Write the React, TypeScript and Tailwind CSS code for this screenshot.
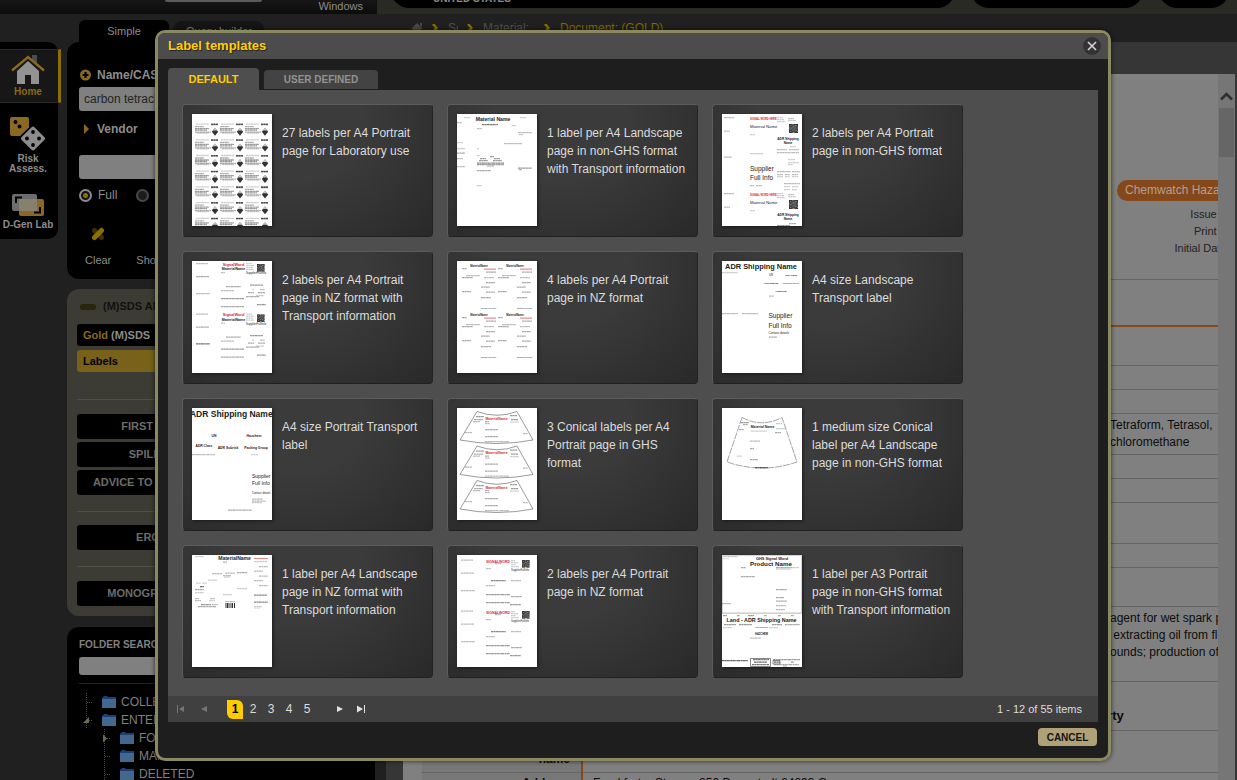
import React from "react";

/* ---------- drawing helpers for the label thumbnails ---------- */

type TextProps = {
  x: number;
  y: number;
  s: number;
  c?: string;
  bold?: boolean;
  mid?: boolean;
  children: React.ReactNode;
};

function T({ x, y, s, c = "#222", bold, mid, children }: TextProps) {
  return (
    <text
      x={x}
      y={y}
      fontSize={s}
      fill={c}
      fontWeight={bold ? 700 : 400}
      textAnchor={mid ? "middle" : "start"}
      fontFamily='"Liberation Sans", Arial, sans-serif'
    >
      {children}
    </text>
  );
}

/* Small print: each entry is [x, y, width, darkness 0..9] */
function Print({ rows, dy = 0 }: { rows: number[][]; dy?: number }) {
  return (
    <g stroke="#111" strokeWidth="1.3" strokeDasharray="2.6 .3 1.4 .3 3.2 .4 1.8 .3">
      {rows.map(([x, y, w, d = 4], i) => (
        <line key={i} x1={x} x2={x + w} y1={y + dy + 0.6} y2={y + dy + 0.6} strokeOpacity={d / 14} />
      ))}
    </g>
  );
}

function Qr({ x, y, s = 8 }: { x: number; y: number; s?: number }) {
  const u = s / 8;
  const cells = ["11101111", "10111001", "11100111", "01011010", "10110111", "11101001", "10111110", "11100111"];
  return (
    <g>
      <rect x={x} y={y} width={s} height={s} fill="#8a8a8a" />
      {cells.map((row, r) =>
        row.split("").map((v, c) => (v === "1" ? <rect key={`${r}-${c}`} x={x + c * u} y={y + r * u} width={u} height={u} fill="#2c2c2c" /> : null)),
      )}
    </g>
  );
}

function LabSheet() {
  const items: React.ReactNode[] = [];
  for (let r = 0; r < 7; r++) {
    for (let c = 0; c < 3; c++) {
      items.push(
        <g key={`${r}-${c}`} transform={`translate(${c * 25} ${r * 15.7})`}>
          <Print rows={[[4, 9.5, 13, 3], [19, 9.6, 7, 9], [19, 10.1, 7, 7], [3, 12, 9, 5], [3, 14, 14, 6], [3, 15.5, 12, 6], [3, 17.5, 16, 5], [5, 18.5, 12, 3]]} />
          <path d="M23 14l3.2 3.8-3.2 4-3.2-4z" fill="#333" />
          <path d="M23 13.500l2.600 3h-5.200z" fill="#c4c4c4" />
        </g>,
      );
    }
  }
  return <>{items}</>;
}

function LandscapeTransport() {
  return (
    <>
      <T x={36} y={6.5} s={5.1} bold mid>Material Name</T>
      <Print
        rows={[[7, 3, 6, 3], [0, 8, 5, 4], [63, 3, 6, 3], [25, 10, 16, 8], [55, 11, 4, 3], [20, 14, 5, 4], [61, 18, 14, 4], [62, 20, 4, 3], [0, 28, 6, 3], [47, 29, 18, 4], [0, 34, 8, 3], [20, 34, 2, 3], [0, 38.5, 8, 5], [20, 41, 3, 3], [33, 42, 4, 6], [23, 44, 6, 6], [37, 44, 6, 6], [0, 44, 6, 4], [22, 46, 9, 6], [36, 46, 9, 6], [20, 48.5, 27, 7], [20, 50, 27, 6], [30, 51.5, 7, 4], [0, 52, 8, 4], [61, 53.5, 14, 6], [62, 55, 3, 5], [20, 56, 14, 5], [20, 71, 5, 3]]}
      />
    </>
  );
}

function PortraitNonGhs() {
  const half = (dy: number) => (
    <g key={dy}>
      <T x={28} y={dy + 6} s={2.6} c="#e02424" bold>SIGNAL WORD HERE</T>
      <T x={28} y={dy + 14.3} s={4.2}>Material Name</T>
      <Qr x={67} y={dy + 10} s={9} />
      <T x={66} y={dy + 26} s={3.2} bold mid>ADR Shipping</T>
      <T x={66} y={dy + 29.6} s={3.2} bold mid>Name</T>
      <Print dy={dy} rows={[[2, 3, 10, 4], [55, 3, 6, 3], [55, 5, 7, 3], [55, 7, 8, 3], [66, 4, 6, 4], [66, 6, 8, 3], [2, 16.5, 6, 4], [28, 20, 5, 3]]} />
    </g>
  );
  return (
    <>
      {half(0)}
      {half(76)}
      <T x={28} y={57} s={6.5}>Supplier</T>
      <T x={28} y={66} s={6.5}>Full Info</T>
      <Print
        rows={[[68, 32, 6, 3], [55, 35, 10, 4], [67, 35, 10, 4], [55, 38, 22, 4], [28, 39, 13, 3], [2, 42.5, 8, 4], [66, 45, 7, 3], [66, 48, 11, 3], [66, 50, 5, 3], [55, 57, 14, 4], [70, 57, 8, 4], [55, 60, 6, 4], [63, 60, 5, 4], [70, 60, 6, 4], [55, 62, 6, 3], [63, 62, 5, 3], [70, 62, 6, 3], [62, 69, 16, 4], [28, 71, 4, 4], [34, 71, 6, 4], [62, 72, 6, 3], [70, 72, 6, 3], [62, 75, 6, 3], [70, 75, 5, 3], [67, 109, 7, 5], [55, 111, 13, 6]]}
      />
    </>
  );
}

function NzTransport() {
  const half = (dy: number) => (
    <g key={dy}>
      <T x={41.5} y={dy + 4.8} s={3.9} c="#cf1f35" bold mid>SignalWord</T>
      <T x={41.5} y={dy + 9} s={3.6} bold mid>MaterialName</T>
      <Qr x={65} y={dy + 3} s={7.5} />
      <T x={54} y={dy + 13.3} s={2.9}>SupplierFullInfo</T>
      <Print dy={dy} rows={[[4, 2, 12, 4], [54, 2, 6, 3], [54, 4, 8, 3], [54, 6, 7, 3], [54, 8, 8, 3], [4, 15, 13, 5], [29, 11, 4, 4], [34, 25, 15, 5], [58, 23.5, 13, 6], [60, 28, 2, 3], [68, 28, 5, 4], [29, 29, 13, 4], [56, 31, 6, 5], [66, 31, 7, 5], [4, 32, 14, 4], [54, 35, 13, 5], [64, 34, 8, 3], [29, 37, 23, 6], [65, 43, 9, 6], [29, 45, 23, 5]]} />
    </g>
  );
  return (
    <>
      {half(0)}
      {half(50.5)}
      <Print rows={[[4, 82, 14, 5]]} />
    </>
  );
}

function FourNz() {
  const quarter = (dx: number, dy: number) => (
    <g key={`${dx}-${dy}`} transform={`translate(${dx} ${dy})`}>
      <T x={22} y={6.3} s={2.7} bold mid>MaterialName</T>
      <rect x={27} y={7.600} width={12} height={1} fill="#dd3340" opacity=".7" />
      <Print rows={[[5, 7, 5, 5], [29, 10.5, 10, 5], [9, 14, 14, 4], [5, 16, 11, 5], [27, 16, 10, 4], [29, 21, 9, 5], [24, 25.5, 9, 5], [5, 30, 9, 5], [29, 30.5, 9, 5], [24, 36, 10, 5]]} />
      <T x={24} y={48} s={2.2}>SupplierFullInfo</T>
    </g>
  );
  return <>{[0, 49].map((dy) => [0, 36].map((dx) => quarter(dx, dy)))}</>;
}

function LandscapeAdr() {
  return (
    <>
      <T x={39} y={7.8} s={7.4} bold mid>ADR Shipping Name</T>
      <T x={49} y={15} s={2.8} mid>UN</T>
      <T x={69} y={15} s={2.4} mid bold>ADR Class</T>
      <T x={49} y={22.5} s={2.4} mid bold>ADR Subrisk</T>
      <T x={69} y={22.5} s={2.5} mid>Packing Group</T>
      <T x={59} y={30.5} s={2.5} mid bold>Hazchem</T>
      <T x={46.5} y={57.3} s={6.5}>Supplier</T>
      <T x={46.5} y={66.5} s={6.5}>Full Info</T>
      <T x={46.5} y={73} s={3.1}>Contact details</T>
      <Print rows={[[0, 11, 16, 3], [47, 34.5, 5, 4], [0, 52, 16, 4], [20, 52, 16, 4], [47, 75.5, 8, 5]]} />
    </>
  );
}

function PortraitAdr() {
  return (
    <>
      <T x={39.3} y={8.8} s={8.5} bold mid>ADR Shipping Name</T>
      <T x={22} y={29} s={3.4} bold mid>UN</T>
      <T x={62} y={29} s={3.4} bold mid>Hazchem</T>
      <T x={12} y={38.8} s={3.3} bold mid>ADR Class</T>
      <T x={36} y={40.8} s={3.4} bold mid>ADR Subrisk</T>
      <T x={64} y={40.8} s={3.3} bold mid>Packing Group</T>
      <T x={60} y={70} s={5}>Supplier</T>
      <T x={60} y={76.5} s={5}>Full Info</T>
      <T x={60} y={86.3} s={2.8}>Contact details</T>
      <Print rows={[[0, 46, 23, 4], [59, 46, 7, 3], [60, 90.5, 11, 4], [60, 92.5, 14, 4], [60, 94, 10, 3], [36, 101.5, 24, 5]]} />
    </>
  );
}

function ThreeConical() {
  return (
    <>
      {[0, 34.5, 69].map((dy) => (
        <g key={dy} transform={`translate(0 ${dy})`}>
          <path d="M20 3.5Q40 11 60 3.5L76 32Q40 39 3 32Z" fill="none" stroke="#555" strokeWidth=".6" />
          <T x={39.5} y={11.5} s={3.4} c="#d9282f" bold mid>MaterialName</T>
          <Print rows={[[19, 8, 8, 6], [17, 11, 9, 5], [16, 13, 7, 4], [53, 7, 7, 6], [54, 11, 7, 6], [53, 13.5, 9, 3], [28, 13, 4, 5], [28, 15, 5, 4], [28, 21, 13, 5], [8, 24, 7, 4], [66, 25, 5, 4], [28, 28, 13, 5], [28, 33, 24, 4]]} />
        </g>
      ))}
    </>
  );
}

function MediumConical() {
  return (
    <>
      <path d="M20 9.5Q40 20 60 9.5L75 54Q40 66 5 54Z" fill="none" stroke="#666" strokeWidth=".6" strokeDasharray="7 1" />
      <T x={40.5} y={20.3} s={3.5} bold mid>Material Name</T>
      <Print rows={[[19, 14, 8, 6], [21, 16, 5, 5], [17, 21, 5, 5], [54, 15, 6, 3], [54, 20, 9, 3], [53, 24, 6, 5], [29, 22.5, 16, 3], [28, 32.5, 10, 4], [28, 40, 4, 5], [15, 47.5, 5, 3], [28, 51, 8, 5], [33, 59, 13, 9]]} />
    </>
  );
}

function LandscapeNz() {
  return (
    <>
      <T x={42.5} y={5} s={5} bold mid>MaterialName</T>
      <rect x={62} y={3} width={14} height={1} fill="#d33" opacity=".6" />
      <Print
        rows={[[3, 1, 9, 3], [31, 6.5, 4, 5], [62, 6, 6, 3], [68, 6, 7, 3], [67, 11, 9, 4], [62, 15.5, 9, 4], [20, 18, 10, 4], [33, 17.5, 10, 4], [45, 17, 10, 5], [31, 20, 8, 4], [32, 21.5, 6, 3], [67, 20.5, 9, 4], [16, 24.5, 9, 3], [62, 25, 9, 4], [4, 27.5, 5, 3], [10, 27.5, 5, 3], [67, 30, 9, 4], [8, 31, 4, 9], [3, 34, 9, 5], [45, 33, 10, 3], [3, 37, 9, 3], [31, 39, 9, 3], [62, 39.5, 13, 7], [3, 43, 4, 4], [18, 43, 5, 4], [3, 45, 6, 4], [17, 45, 6, 3], [33, 46, 10, 4], [62, 46.5, 14, 7], [9, 49, 10, 6], [20, 49, 6, 4], [6, 51, 18, 5], [62, 51, 8, 3], [62, 52.5, 6, 2]]}
      />
      <path d="M34 48v5M35.5 48v5M37 48v5M39 48v5M40.5 48v5M42.5 48v5" stroke="#333" strokeWidth="1" />
    </>
  );
}

function PortraitNz() {
  const half = (dy: number) => (
    <g key={dy}>
      <T x={41} y={dy + 7.6} s={3.5} c="#d42a42" bold mid>SIGNALWORD</T>
      <Qr x={65} y={dy + 5} s={7.5} />
      <T x={54} y={dy + 15.8} s={2.6}>SupplierFullInfo</T>
      <Print dy={dy} rows={[[4, 4.5, 12, 4], [38, 8, 6, 4], [54, 5, 4, 3], [54, 7, 7, 3], [54, 9, 5, 3], [54, 11, 8, 3], [29, 13, 5, 4], [4, 17.5, 13, 4], [34, 25, 15, 7], [54, 25, 10, 4], [29, 30, 9, 4], [4, 35, 14, 4], [29, 39, 24, 6], [54, 41, 11, 5], [29, 47, 24, 6], [53, 49, 11, 6]]} />
    </g>
  );
  return <>{[0, 51].map(half)}</>;
}

function A3Portrait() {
  return (
    <>
      <path d="M.5.5h79v57.5h-79zM0 58.3h80" fill="none" stroke="#aaa" strokeWidth=".5" />
      <T x={50} y={4.6} s={3.9} bold mid>GHS Signal Word</T>
      <T x={49} y={11} s={6.2} bold mid>Product Name</T>
      <T x={39.5} y={67.3} s={5.4} bold mid>Land - ADR Shipping Name</T>
      <T x={39.5} y={72.6} s={2.4} mid>UN Number</T>
      <T x={39.5} y={79.7} s={2.6} bold mid>HAZCHEM</T>
      <Print
        rows={[[1, 1, 15, 3], [1, 3, 6, 2], [19, 12, 5, 5], [54, 12, 16, 5], [70, 12, 7, 3], [54, 13.5, 15, 3], [19, 21, 14, 5], [54, 34, 11, 5], [54, 42, 8, 5], [54, 45.5, 11, 5], [54, 50, 10, 4], [54, 54, 9, 4], [0, 48, 9, 4], [1, 60, 4, 6], [15, 60, 3, 5], [26, 60, 6, 6], [42, 60, 3, 5], [56, 60, 3, 5], [69, 60, 3, 5], [2, 69, 12, 6], [17, 69, 13, 6], [50, 69, 10, 6], [63, 69, 15, 5], [1, 72, 9, 3], [47, 72, 9, 3], [28, 82.5, 11, 4], [0, 105, 26, 9], [31, 104, 16, 8], [32, 106.5, 13, 9], [30, 109, 17, 8], [51, 104, 27, 6], [52, 106.5, 6, 9], [69, 106.5, 3, 6], [52, 109, 25, 5], [61, 110.5, 4, 4]]}
      />
      <path d="M28.5 103.5h20v8h-20zM51 105.5h7v3.5h-7z" fill="none" stroke="#555" strokeWidth=".7" />
    </>
  );
}

const templates: { name: string; art: () => React.ReactElement }[] = [
  { name: "27 labels per A4 Portrait page for Laboratory use", art: LabSheet },
  { name: "1 label per A4 Landscape page in non-GHS format with Transport information", art: LandscapeTransport },
  { name: "2 labels per A4 Portrait page in non-GHS format", art: PortraitNonGhs },
  { name: "2 labels per A4 Portrait page in NZ format with Transport information", art: NzTransport },
  { name: "4 labels per A4 Portrait page in NZ format", art: FourNz },
  { name: "A4 size Landscape Transport label", art: LandscapeAdr },
  { name: "A4 size Portrait Transport label", art: PortraitAdr },
  { name: "3 Conical labels per A4 Portrait page in GHS format", art: ThreeConical },
  { name: "1 medium size Conical label per A4 Landscape page in non-GHS format", art: MediumConical },
  { name: "1 label per A4 Landscape page in NZ format with Transport information", art: LandscapeNz },
  { name: "2 labels per A4 Portrait page in NZ format", art: PortraitNz },
  { name: "1 label per A3 Portrait page in non-GHS format with Transport information", art: A3Portrait },
];

function TemplateCard({ name, art: Art }: { name: string; art: () => React.ReactElement }) {
  return (
    <button
      type="button"
      className="flex h-[133px] items-start gap-[10px] rounded border border-t-[#5c5c5c] border-r-[#242424] border-b-[#202020] border-l-[#5c5c5c] bg-[radial-gradient(ellipse_at_45%_15%,#3b3b3b_35%,#292929_100%)] py-[9px] pr-2 pl-[9px] text-left"
    >
      <svg viewBox="0 0 80 112" className="h-28 w-20 shrink-0 bg-white shadow-[1px_1px_3px_#1a1a1a]" aria-hidden="true">
        <Art />
      </svg>
      <span className="pt-[10px] text-xs leading-[18px] text-[#dcdcdc]">{name}</span>
    </button>
  );
}

/* ---------- dialog ---------- */

function Dialog() {
  return (
    <div
      role="dialog"
      aria-label="Label templates"
      className="flex flex-col overflow-hidden rounded-[10px] border-[3px] border-[#8b8961] bg-[#1e1e1e] shadow-[0_0_5px_#000a]"
    >
      <header className="flex h-[26px] items-center justify-between bg-[#4c4c4c] pr-[7px] pl-[10px]">
        <h2 className="text-[13px] font-bold text-[#ffd000] [text-shadow:1px_1px_1px_#222]">Label templates</h2>
        <button type="button" aria-label="Close" className="flex size-[18px] items-center justify-center rounded-full bg-[#333]">
          <svg viewBox="0 0 10 10" className="size-[10px]" fill="none" stroke="#d2d2d2" strokeWidth="1.7">
            <path d="M1 1l8 8M9 1l-8 8" />
          </svg>
        </button>
      </header>
      <div className="px-[10px] pt-[9px]">
        <div className="flex items-end gap-[5px]">
          <button type="button" className="h-[22px] w-[91px] rounded-t bg-[#4e4e4e] text-[11px] font-bold text-[#ffcc00]">
            DEFAULT
          </button>
          <button type="button" className="mb-px h-[19px] w-[114px] rounded-t bg-[#434343] text-[10px] font-bold text-[#929292]">
            USER DEFINED
          </button>
        </div>
        <div className="grid grid-cols-[repeat(3,251px)] gap-[14px] bg-[#4e4e4e] px-[14px] pt-[14px] pb-[18px]">
          {templates.map((t) => (
            <TemplateCard key={t.name} {...t} />
          ))}
        </div>
        <div className="flex h-[26px] items-center bg-[#404040] pr-4 pl-[9px] text-xs text-[#dcdcdc]">
          <button type="button" aria-label="First page" className="mr-4">
            <svg viewBox="0 0 8 8" className="size-2" fill="#757575">
              <path d="M0 0h1v8H0zM7 1v6L2 4z" />
            </svg>
          </button>
          <button type="button" aria-label="Previous page" className="mr-[18px]">
            <svg viewBox="0 0 8 8" className="size-2" fill="#757575">
              <path d="M6 1v6L0 4z" />
            </svg>
          </button>
          <button type="button" aria-current="page" className="h-[19px] w-4 rounded-tr-md rounded-bl-md bg-[#ffcc00] font-bold text-black">
            1
          </button>
          <div className="ml-px flex">
            {["2", "3", "4", "5"].map((n) => (
              <button key={n} type="button" className="w-[18px]">
                {n}
              </button>
            ))}
          </div>
          <button type="button" aria-label="Next page" className="ml-[19px]">
            <svg viewBox="0 0 8 8" className="size-2" fill="#e2e2e2">
              <path d="M2 1v6l6-3z" />
            </svg>
          </button>
          <button type="button" aria-label="Last page" className="ml-[14px]">
            <svg viewBox="0 0 8 8" className="size-2" fill="#e2e2e2">
              <path d="M7 0h1v8H7zM0 .5v7L6 4z" />
            </svg>
          </button>
          <span className="ml-auto text-[11px]">1 - 12 of 55 items</span>
        </div>
      </div>
      <footer className="flex justify-end px-[11px] pt-[6px] pb-3">
        <button type="button" className="h-[18px] w-[59px] rounded bg-[#b0a178] text-[10px] font-bold text-[#141414]">
          CANCEL
        </button>
      </footer>
    </div>
  );
}

/* ---------- page behind the dialog ---------- */

function SideNav() {
  return (
    <nav className="mt-7 w-[67px] shrink-0 text-center text-[10px] leading-[10px] font-bold text-[#8c8c8c]">
      <div className="h-[197px] w-[58px] rounded-r-[10px] bg-black pt-[7px]">
        <a href="#home" className="block h-[54px] w-[61px] border-y border-r-[3px] border-y-[#2b2b2b] border-r-[#8a7000] bg-[#171717] pt-[5px] pr-[2px] text-[#8a6a12]">
          <svg viewBox="0 0 34 30" className="mx-auto h-[30px] w-[34px]">
            <path d="M21 0h5v9l-5-5z" fill="#4d4d4d" />
            <path d="M17 6L28 16v13h-8v-9h-6v9H6V16z" fill="#929292" />
            <path d="M1 15.500L17 2l16 13.500" fill="none" stroke="#8a6a22" strokeWidth="2.400" />
          </svg>
          <span className="mt-[2px] block">Home</span>
        </a>
        <a href="#risk" className="mt-[14px] block pr-[2px]">
          <svg viewBox="0 0 36 34" className="mx-auto h-[34px] w-9">
            <rect x="0" y="0" width="19" height="19" rx="2" fill="#8a6a22" />
            <path d="M23 6.500L38 21.500 23 37 7.500 21.500z" fill="#000" />
            <rect x="14" y="12.500" width="18" height="18" rx="2" transform="rotate(45 23 21.500)" fill="#8c8c8c" />
            <g fill="#000">
              <circle cx="5.500" cy="5" r="2" />
              <circle cx="9.500" cy="9.500" r="2" />
              <circle cx="23" cy="15" r="1.900" />
              <circle cx="17" cy="21.500" r="1.900" />
              <circle cx="29" cy="21.500" r="1.900" />
              <circle cx="23" cy="28" r="1.900" />
            </g>
          </svg>
          <span className="mx-auto mt-[3px] block w-11">Risk Assess.</span>
        </a>
        <a href="#dgen" className="mt-5 block pr-[2px] whitespace-nowrap">
          <svg viewBox="0 0 32 23" className="mx-auto h-[23px] w-8">
            <rect x="0" y="0" width="25" height="17" rx="2" fill="#6d6d6d" />
            <rect x="7" y="5" width="25" height="17" rx="2" fill="#8a6a22" />
            <path d="M7 5h18v12H9a2 2 0 0 1-2-2z" fill="#87806c" />
            <path d="M4 9V3.500h6M22 18.500h6V13" fill="none" stroke="#000" strokeWidth="2" />
          </svg>
          <span className="mt-[3px] block">D-Gen Lab</span>
        </a>
      </div>
    </nav>
  );
}

function SearchPanel() {
  return (
    <section className="h-[237px] rounded-xl bg-black px-3 text-xs text-[#8c8c8c]">
      <label htmlFor="name" className="flex h-[45px] items-center gap-[6px] pt-[21px] font-bold">
        <svg viewBox="0 0 12 12" className="size-3">
          <circle cx="6.500" cy="6" r="5.500" fill="#8a6a22" />
          <path d="M6.500 3v6M3.500 6h6" stroke="#000" strokeWidth="2.200" />
        </svg>
        Name/CAS No
      </label>
      <input id="name" defaultValue="carbon tetrachloride" className="block h-6 w-full rounded-[3px] bg-[#808080] px-[5px] text-xs text-[#242424]" />
      <label htmlFor="vendor" className="flex h-11 items-center gap-2 pb-[9px] pl-[5px] font-bold">
        <svg viewBox="0 0 5 10" className="h-[10px] w-[5px]" fill="#8a6a12">
          <path d="M0 0l5 5-5 5z" />
        </svg>
        Vendor
      </label>
      <input id="vendor" className="block h-6 w-full rounded-[3px] bg-[#808080] px-[5px]" />
      <div className="mt-2 flex items-center gap-[19px]">
        <label className="flex items-center gap-[6px]">
          <input type="radio" name="scope" defaultChecked className="size-[13px] appearance-none rounded-full border-2 border-[#8c8c8c] bg-[radial-gradient(circle,#8a7000_0_2px,#111_3px)]" />
          Full
        </label>
        <label className="flex items-center gap-[6px]">
          <input type="radio" name="scope" className="size-[13px] appearance-none rounded-full border-2 border-[#4a4a4a] bg-[#1c1c1c]" />
          Gold
        </label>
      </div>
      <div className="mt-[23px] flex items-start gap-[25px] pl-[6px] text-[11px] leading-4">
        <button type="button" className="flex flex-col items-center gap-[10px]">
          <svg viewBox="0 0 14 16" className="h-4 w-[14px]" strokeWidth="5" strokeLinecap="round">
            <path d="M3.500 4.500l7 7" stroke="#3c3000" />
            <path d="M10.500 4.500l-7 7" stroke="#8a7000" />
          </svg>
          <span>Clear</span>
        </button>
        <button type="button" className="pt-[26px]">Show all</button>
      </div>
    </section>
  );
}

function Action({ children }: { children: string }) {
  return (
    <button type="button" className="block h-[25px] w-[142px] rounded-[3px] bg-black text-[11px] font-bold text-[#6c6c6c]">
      {children}
    </button>
  );
}

function SdsPanel() {
  return (
    <section className="mt-[10px] h-[327px] rounded-xl bg-[#3c3c34] px-[10px] text-[11px] font-bold">
      <h3 className="flex h-[35px] items-center gap-[7px] pl-[3px] text-[#12120c]">
        <span className="h-[6px] w-4 rounded-[3px] bg-[#2a2608]" />
        (M)SDS AND LABELS
      </h3>
      <div className="flex h-[22px] items-center gap-[3px] rounded-[3px] bg-black px-[6px] text-[#8c8c8c]">
        <span className="text-[#8a6a12]">Gold</span>(M)SDS
      </div>
      <div className="mt-1 flex h-[22px] items-center rounded-[3px] bg-[#78621a] px-[6px] text-black">Labels</div>
      <hr className="mt-[27px] border-[#505048]" />
      <div className="mt-[14px] flex flex-col gap-[3px]">
        <Action>FIRST AID</Action>
        <Action>SPILLS</Action>
        <Action>ADVICE TO DOCTOR</Action>
      </div>
      <hr className="mt-4 mb-[13px] border-[#505048]" />
      <Action>ERG</Action>
      <hr className="mt-4 mb-[14px] border-[#505048]" />
      <Action>MONOGRAPHS</Action>
    </section>
  );
}

function Folder({ children, nested, mark }: { children: string; nested?: boolean; mark?: "open" | "closed" }) {
  return (
    <li className={nested ? "flex h-[18px] items-center pl-[18px]" : "flex h-[18px] items-center"}>
      <svg viewBox="0 0 20 18" className="h-[18px] w-5 shrink-0" fill="none">
        <path d="M7.500 0v18M8 9.500h6" stroke="#4c4c4c" strokeDasharray="1 1" />
        {mark === "open" && <path d="M10 6v6H4z" fill="#6f6a58" />}
        {mark === "closed" && <path d="M6 5.500l4 4-4 4z" fill="#6f6a58" />}
      </svg>
      <svg viewBox="0 0 14 12" className="mr-[5px] ml-[3px] h-3 w-[14px] shrink-0">
        <path d="M1 1l1-1h3l1 1h8v11H0V2z" fill="#1d3f78" />
        <path d="M0 3h14v9H0z" fill="#43678f" />
      </svg>
      {children}
    </li>
  );
}

function FolderPanel() {
  return (
    <section className="mt-[11px] rounded-t-xl bg-black px-3 pt-3 text-[#808080]">
      <label htmlFor="folder" className="block h-[18px] text-[10px] leading-3 font-bold">FOLDER SEARCH</label>
      <input id="folder" className="block h-[18px] w-full rounded-[3px] bg-[#808080]" />
      <hr className="mt-2 mb-[9px] border-[#222]" />
      <ul className="text-xs">
        <Folder>COLLECTIONS</Folder>
        <Folder mark="open">ENTERPRISE</Folder>
        <Folder nested mark="closed">FOLDERS</Folder>
        <Folder nested>MANIFEST</Folder>
        <Folder nested>DELETED</Folder>
      </ul>
    </section>
  );
}

function Chevron() {
  return (
    <svg viewBox="0 0 6 8" className="h-2 w-[6px] shrink-0" fill="none" stroke="#8a7000" strokeWidth="2.400">
      <path d="M1 0l3.500 4L1 8" />
    </svg>
  );
}

const rowLine = "border-b border-[#646464]";

function DocumentView() {
  return (
    <div className="flex min-h-0 flex-1 bg-[#363636] pt-8 pr-[2px] pl-[17px]">
      <div className="min-w-0 flex-1 overflow-hidden bg-[#808080] pl-[19px] text-xs leading-[17px] text-[#0c0c0c]">
        <div className={`flex h-[206px] justify-end pt-[106px] ${rowLine}`}>
          <div className="-mr-7 w-[129px] shrink-0 text-right text-[11px] whitespace-nowrap text-[#222]">
            <div className="mb-[5px] h-[21px] rounded-l-full bg-[#84481a] pl-2 text-left text-xs leading-[20px] text-[#b3a090]">Chemwatch Hazard Alert</div>
            <p>Issue Date:</p>
            <p>Print Date:</p>
            <p>Initial Date (1):</p>
          </div>
        </div>
        <div className="h-[47px] border-b-2 border-[#84481a]" />
        <div className={`h-[39px] ${rowLine}`} />
        <div className={`h-6 ${rowLine}`} />
        <div className={`h-6 ${rowLine}`} />
        <div className={`flex h-[41px] justify-end pt-[3px] ${rowLine}`}>
          <p className="w-[108px] whitespace-nowrap">Tetraform, Tetrasol,<br />chloromethane</p>
        </div>
        <div className={`h-6 ${rowLine}`} />
        <div className={`h-6 ${rowLine}`} />
        <div className={`h-[41px] ${rowLine}`} />
        <div className={`h-6 ${rowLine}`} />
        <div className={`h-[39px] ${rowLine}`} />
        <div className={`flex h-[75px] justify-end pt-[3px] ${rowLine}`}>
          <p className="w-[108px] whitespace-nowrap">agent for wet spark plugs<br />{"\u00a0"}extracting oil from flowers<br />ounds; production of</p>
        </div>
        <div className={`flex h-[49px] items-end justify-end pb-[6px] ${rowLine}`}>
          <h3 className="w-[118px] text-[13px] font-bold">arty</h3>
        </div>
        <table className="w-full table-fixed border-collapse">
          <tbody>
            <tr className={`h-[41px] ${rowLine}`}>
              <th scope="row" className="w-[160px] border-r-2 border-r-[#84481a] bg-[#787878] pr-[11px] text-right">Registered company name</th>
              <td />
            </tr>
            <tr className="h-[41px]">
              <th scope="row" className="border-r-2 border-r-[#84481a] bg-[#787878] pt-[2px] pr-[11px] text-right align-top">Address</th>
              <td className="pt-[2px] pl-[10px] align-top whitespace-nowrap">Frankfurter Strasse 250 Darmstadt 64293 G</td>
            </tr>
          </tbody>
        </table>
      </div>
      <div className="w-[17px] shrink-0 bg-[#767676] px-px pt-[17px]">
        <svg viewBox="0 0 15 17" className="h-[17px] w-[15px]" fill="none" stroke="#303030" strokeWidth="2.600">
          <path d="M2 8.500L7.500 3 13 8.500" />
        </svg>
        <div className="h-[49px] bg-[#666]" />
      </div>
    </div>
  );
}

export default function App() {
  return (
    <div className="relative flex h-screen flex-col overflow-hidden bg-[#202020] font-['Liberation_Sans',Arial,sans-serif]">
      <header className="flex h-[14px] shrink-0 overflow-hidden bg-[#2a2a25]">
        <div className="flex w-[377px] shrink-0 items-start justify-between bg-gradient-to-b from-[#161616] to-[#0c0c0c] pr-[14px] pl-[165px] text-[11px] leading-3 text-[#8c8c8c]">
          <span className="h-[2px] w-[97px] rounded-b-sm bg-[#5a5a5a]" />
          <span>Windows</span>
        </div>
        <div className="flex min-w-0 flex-1 items-end pr-[8px] pb-[6px] pl-[14px] text-[10px] leading-3 font-bold text-[#8c8c8c]">
          <div className="h-9 flex-1 rounded-full bg-black pt-[21px] pl-[42px]">UNITED STATES</div>
          <div className="ml-4 h-9 w-[172px] rounded-full bg-black" />
          <div className="ml-4 h-9 w-[70px] rounded-full bg-black" />
        </div>
      </header>

      <div className="flex min-h-0 flex-1">
        <SideNav />
        <div className="w-[308px] shrink-0">
          <div className="flex h-7 items-end gap-[5px] pl-3 text-[11px] text-[#8c8c8c]">
            <button type="button" className="-mb-3 h-[34px] w-[90px] rounded-t-md bg-black pb-3">Simple</button>
            <button type="button" className="h-[21px] w-[90px] rounded-t-lg bg-[#151515]">Query builder</button>
          </div>
          <SearchPanel />
          <SdsPanel />
          <FolderPanel />
        </div>
        <main className="ml-[11px] flex min-w-0 flex-1 flex-col">
          <div className="flex h-7 shrink-0 items-center pl-[25px] text-xs text-[#505050]">
            <svg viewBox="0 0 12 10" className="mr-[9px] h-[10px] w-3 shrink-0" fill="#4a4a4a">
              <path d="M6 0l6 6h-2v4H7V7H5v3H2V6H0zM9 0h2v4L9 2z" />
            </svg>
            <Chevron />
            <span className="mr-[9px] ml-[10px] w-[10px] overflow-hidden">Search</span>
            <Chevron />
            <span className="mx-[10px] w-[51px]">Material:</span>
            <Chevron />
            <span className="ml-[10px] text-[#806800]">Document: (GOLD)</span>
          </div>
          <DocumentView />
        </main>
      </div>

      <div className="absolute inset-0 pt-[30px] pr-[126px] pl-[155px]">
        <Dialog />
      </div>
    </div>
  );
}
